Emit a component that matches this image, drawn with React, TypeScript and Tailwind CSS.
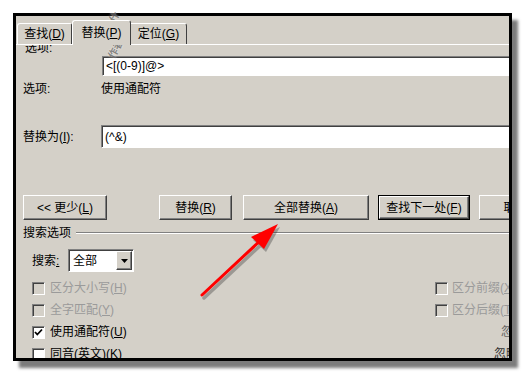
import React from "react";

const raised =
  "border border-t-white border-l-white border-r-[#404040] border-b-[#404040] shadow-[inset_-1px_-1px_0_#808080]";
const sunken =
  "border border-t-[#808080] border-l-[#808080] border-r-white border-b-white shadow-[inset_1px_1px_0_#404040]";

function U({ c }: { c: string }) {
  return <span className="underline underline-offset-[1px]">{c}</span>;
}

function Check({ disabled, checked }: { disabled?: boolean; checked?: boolean }) {
  return (
    <div
      className={
        "w-[13px] h-[13px] shrink-0 flex items-center justify-center " +
        sunken +
        (disabled ? " bg-[#d4d0c8]" : " bg-white")
      }
    >
      {checked && (
        <svg width="9" height="9" viewBox="0 0 9 9">
          <path d="M1 4 L3.3 6.5 L8 1.5" stroke="#000" strokeWidth="1.8" fill="none" />
        </svg>
      )}
    </div>
  );
}

export default function App() {
  return (
    <div className='relative w-[525px] h-[374px] bg-white pt-[13px] pl-[13px] overflow-hidden font-["Liberation_Sans","Noto_Sans_CJK_SC",sans-serif] text-[12px] text-black'>
      <div className="w-[499px] h-[348px] border-[3px] border-black bg-[#d4d0c8] overflow-hidden shadow-[6px_7px_3px_#7c7c7c] flex flex-col">
        {/* tabs */}
        <div className="flex items-end mt-[4px] ml-[1px] h-[24px] relative z-10 shrink-0">
          <div className="h-[21px] w-[55px] shrink-0 flex items-center justify-center border-t border-l border-white border-r border-r-[#404040] rounded-tl-[3px] rounded-tr-[2px]">
            <span className="leading-none">
              查找(<U c="D" />)
            </span>
          </div>
          <div className="h-[25px] -mb-px w-[59px] shrink-0 flex items-center justify-center border-t border-l border-white border-r border-r-[#404040] rounded-t-[3px] bg-[#d4d0c8]">
            <span className="leading-none">
              替换(<U c="P" />)
            </span>
          </div>
          <div className="h-[21px] w-[56px] shrink-0 flex items-center justify-center border-t border-white border-r border-r-[#404040] rounded-tr-[3px]">
            <span className="leading-none">
              定位(<U c="G" />)
            </span>
          </div>
        </div>
        <div className="border-t border-white flex-1 flex flex-col">
          <div className="h-[11px] overflow-hidden ml-[9px] shrink-0">
            <div className="-mt-[5px] leading-[16px]">选项:</div>
          </div>
          <div className={"ml-[86px] h-[20px] w-[420px] shrink-0 bg-white flex items-center pl-[3px] " + sunken}>
            &lt;[(0-9)]@&gt;
          </div>
          <div className="mt-[5px] h-[16px] flex items-center shrink-0">
            <div className="ml-[7px] w-[78px] shrink-0">选项:</div>
            <div>使用通配符</div>
          </div>
          <div className="mt-[28px] h-[23px] flex items-center shrink-0">
            <div className="ml-[7px] w-[78px] shrink-0">
              替换为(<U c="I" />):
            </div>
            <div className={"h-[23px] w-[420px] shrink-0 bg-white flex items-center pl-[3px] " + sunken}>(^&amp;)</div>
          </div>
          {/* buttons */}
          <div className="mt-[47px] h-[25px] flex shrink-0">
            <div className={"ml-[7px] w-[84px] shrink-0 flex items-center justify-center " + raised}>
              &lt;&lt; 更少(<U c="L" />)
            </div>
            <div className={"ml-[52px] w-[73px] shrink-0 flex items-center justify-center " + raised}>
              替换(<U c="R" />)
            </div>
            <div className={"ml-[11px] w-[126px] shrink-0 flex items-center justify-center " + raised}>
              全部替换(<U c="A" />)
            </div>
            <div className="ml-[9px] w-[92px] shrink-0 border border-black flex">
              <div className={"flex-1 flex items-center justify-center " + raised}>
                查找下一处(<U c="F" />)
              </div>
            </div>
            <div className={"ml-[9px] w-[73px] shrink-0 flex items-center justify-center " + raised}>
              取消
            </div>
          </div>
          {/* group header */}
          <div className="mt-[5px] h-[16px] flex items-center ml-[7px] shrink-0">
            <span>搜索选项</span>
            <div className="flex-1 ml-[5px] h-[2px] border-t border-t-[#808080] border-b border-b-white" />
          </div>
          <div className="mt-[8px] h-[23px] flex items-center shrink-0">
            <div className="ml-[16px] w-[36px] shrink-0">
              搜索<span className="underline">:</span>
            </div>
            <div className={"w-[66px] h-[23px] shrink-0 bg-white flex items-center " + sunken}>
              <span className="flex-1 pl-[4px]">全部</span>
              <div className={"w-[16px] h-[19px] mr-px bg-[#d4d0c8] flex items-center justify-center " + raised}>
                <svg width="7" height="4" viewBox="0 0 7 4">
                  <path d="M0 0 H7 L3.5 4 Z" fill="#000" />
                </svg>
              </div>
            </div>
          </div>
          {/* checkboxes */}
          <div className="mt-[5px] flex flex-col shrink-0">
            <div className="h-[22px] flex items-center shrink-0">
              <div className="ml-[16px] w-[403px] shrink-0 flex items-center">
                <Check disabled />
                <span className="ml-[5px] text-[#9a9a9a]">
                  区分大小写(<U c="H" />)
                </span>
              </div>
              <Check disabled />
              <span className="ml-[4px] text-[#9a9a9a] whitespace-nowrap">
                区分前缀(<U c="X" />)
              </span>
            </div>
            <div className="h-[22px] flex items-center shrink-0">
              <div className="ml-[16px] w-[403px] shrink-0 flex items-center">
                <Check disabled />
                <span className="ml-[5px] text-[#9a9a9a]">
                  全字匹配(<U c="Y" />)
                </span>
              </div>
              <Check disabled />
              <span className="ml-[4px] text-[#9a9a9a] whitespace-nowrap">
                区分后缀(<U c="T" />)
              </span>
            </div>
            <div className="h-[22px] flex items-center shrink-0">
              <div className="ml-[16px] w-[469px] shrink-0 flex items-center">
                <Check checked />
                <span className="ml-[5px]">
                  使用通配符(<U c="U" />)
                </span>
              </div>
              <span className="text-[#666] whitespace-nowrap">忽略</span>
            </div>
            <div className="h-[22px] flex items-center shrink-0">
              <div className="ml-[16px] w-[462px] shrink-0 flex items-center">
                <Check />
                <span className="ml-[5px]">
                  同音(英文)(<U c="K" />)
                </span>
              </div>
              <span className="text-[#333] whitespace-nowrap underline">忽略空格</span>
            </div>
          </div>
        </div>
      </div>

      {/* watermark */}
      <div className="absolute left-[95px] top-[21px] -rotate-[62deg] text-[10px] font-bold text-[#6a6a6a] opacity-75 whitespace-nowrap leading-none [text-shadow:0_0_2px_#ffffff]">
        好仔什
      </div>
      <div className="absolute left-[106px] top-[44px] -rotate-[62deg] text-[10px] font-bold text-[#6a6a6a] opacity-75 whitespace-nowrap leading-none [text-shadow:0_0_2px_#ffffff]">
        作者
      </div>

      {/* red arrow */}
      <svg className="absolute left-0 top-0 pointer-events-none" width="525" height="374" viewBox="0 0 525 374">
        <g transform="translate(2,3)" opacity="0.35">
          <line x1="202" y1="295" x2="262" y2="239" stroke="#333" strokeWidth="3.5" strokeLinecap="round" />
          <polygon points="278,224 251,237 264,249" fill="#333" />
        </g>
        <line x1="202" y1="295" x2="262" y2="239" stroke="#f00" strokeWidth="3" strokeLinecap="round" />
        <polygon points="278,224 251,237 264,249" fill="#f00" />
      </svg>
    </div>
  );
}
